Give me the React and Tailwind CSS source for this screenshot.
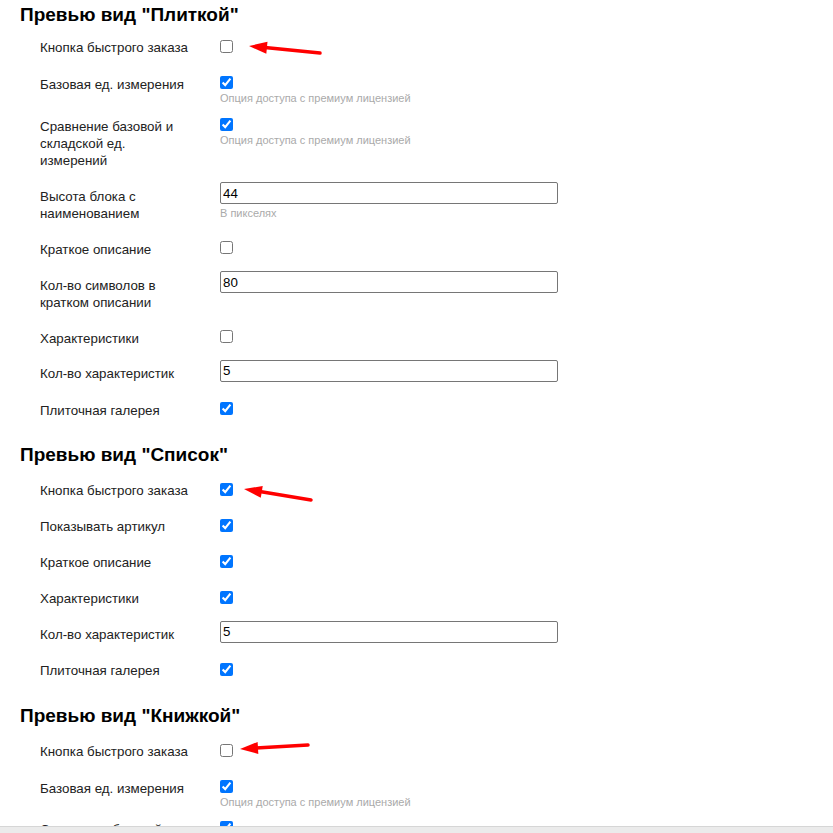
import React from 'react';

const Arrow = ({x1, y1, x2, y2}) => {
    // tail (x1,y1) -> tip (x2,y2)
    const dx = x2 - x1;
    const dy = y2 - y1;
    const len = Math.sqrt(dx * dx + dy * dy);
    const ux = dx / len;
    const uy = dy / len;
    const bx = x2 - ux * 18;
    const by = y2 - uy * 18;
    const px = -uy * 6;
    const py = ux * 6;
    return (
        <g>
            <line x1={x1} y1={y1} x2={bx + ux * 2} y2={by + uy * 2} stroke="#ff0000" strokeWidth="3.5" strokeLinecap="round"/>
            <polygon points={`${x2},${y2} ${bx + px},${by + py} ${bx - px},${by - py}`} fill="#ff0000"/>
        </g>
    );
};

const Check = ({checked}) => (
    <input type="checkbox" defaultChecked={checked} className="m-0 block w-[13px] h-[13px]"/>
);

const TextInput = ({value}) => (
    <input type="text" defaultValue={value}
           className="block w-[338px] h-[22px] border border-[#767676] rounded-[2px] px-[2px] text-[13.33px] text-black bg-white outline-none"/>
);

const Hint = ({children}) => (
    <div className="text-[11px] leading-[13px] text-[#aaaaaa] mt-[3px]">{children}</div>
);

const Row = ({label, children, mt, labelPt = 0, ctrlPt = 0}) => (
    <div className="flex items-start" style={{marginTop: mt}}>
        <div className="w-[220px] shrink-0 pl-[40px] pr-[30px] text-[13.33px] leading-[17px] text-[#222]"
             style={{paddingTop: labelPt}}>
            {label}
        </div>
        <div style={{paddingTop: ctrlPt}}>{children}</div>
    </div>
);

const Heading = ({children, mt}) => (
    <h2 className="pl-[20px] text-[19px] leading-[24px] font-bold text-black" style={{marginTop: mt}}>{children}</h2>
);

const App = () => {
    return (
        <div className="w-[833px] h-[833px] flex flex-col bg-white overflow-hidden"
             style={{fontFamily: '"Liberation Sans", Arial, sans-serif'}}>
            <div className="relative flex-1 overflow-hidden">
                {/* Плиткой */}
                <Heading mt={3}>Превью вид "Плиткой"</Heading>
                <Row label="Кнопка быстрого заказа" mt={12} ctrlPt={1}><Check/></Row>
                <Row label="Базовая ед. измерения" mt={20}>
                    <Check checked/>
                    <Hint>Опция доступа с премиум лицензией</Hint>
                </Row>
                <Row label="Сравнение базовой и складской ед. измерений" mt={13}>
                    <Check checked/>
                    <Hint>Опция доступа с премиум лицензией</Hint>
                </Row>
                <Row label="Высота блока с наименованием" mt={13} labelPt={5.5}>
                    <TextInput value="44"/>
                    <Hint>В пикселях</Hint>
                </Row>
                <Row label="Краткое описание" mt={19.5}><Check/></Row>
                <Row label="Кол-во символов в кратком описании" mt={13} labelPt={5.5}>
                    <TextInput value="80"/>
                </Row>
                <Row label="Характеристики" mt={19}><Check/></Row>
                <Row label="Кол-во характеристик" mt={13} labelPt={5.5}>
                    <TextInput value="5"/>
                </Row>
                <Row label="Плиточная галерея" mt={19.5}><Check checked/></Row>

                {/* Список */}
                <Heading mt={24}>Превью вид "Список"</Heading>
                <Row label="Кнопка быстрого заказа" mt={15} ctrlPt={1}><Check checked/></Row>
                <Row label="Показывать артикул" mt={19} ctrlPt={1}><Check checked/></Row>
                <Row label="Краткое описание" mt={19} ctrlPt={1}><Check checked/></Row>
                <Row label="Характеристики" mt={19} ctrlPt={1}><Check checked/></Row>
                <Row label="Кол-во характеристик" mt={14} labelPt={5}>
                    <TextInput value="5"/>
                </Row>
                <Row label="Плиточная галерея" mt={19} ctrlPt={1}><Check checked/></Row>

                {/* Книжкой */}
                <Heading mt={25}>Превью вид "Книжкой"</Heading>
                <Row label="Кнопка быстрого заказа" mt={15} ctrlPt={1}><Check/></Row>
                <Row label="Базовая ед. измерения" mt={20}>
                    <Check checked/>
                    <Hint>Опция доступа с премиум лицензией</Hint>
                </Row>
                <Row label="Сравнение базовой и складской ед. измерений" mt={12}>
                    <Check checked/>
                    <Hint>Опция доступа с премиум лицензией</Hint>
                </Row>

                <svg className="absolute left-0 top-0 pointer-events-none" width="833" height="826">
                    <Arrow x1={320} y1={53} x2={249} y2={46}/>
                    <Arrow x1={311} y1={500} x2={244} y2={489}/>
                    <Arrow x1={308} y1={745} x2={240} y2={749}/>
                </svg>
            </div>
            <div className="h-[7px] shrink-0 bg-[#ebebeb] border-t border-[#d6d6d6]"/>
        </div>
    );
};

export default App;
